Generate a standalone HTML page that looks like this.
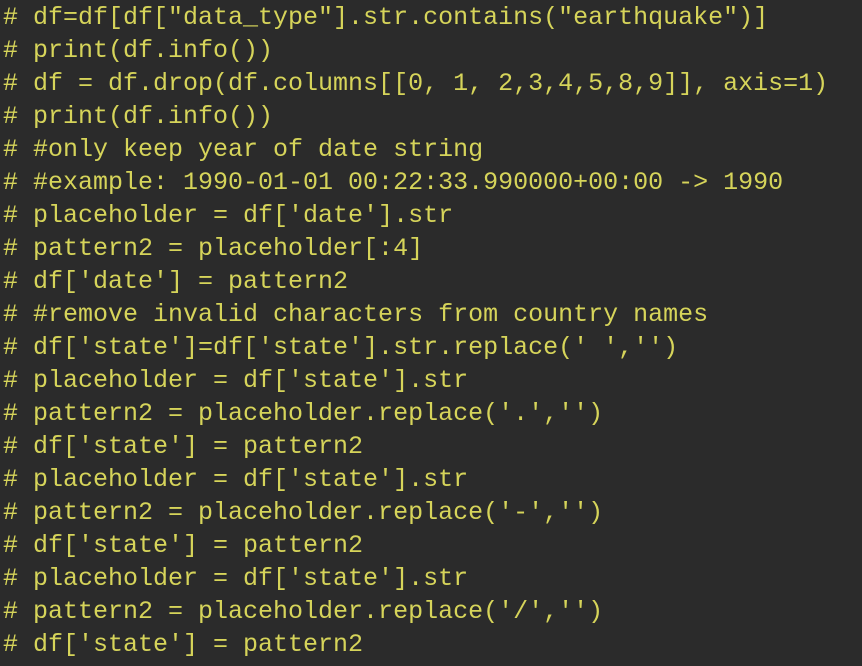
<!DOCTYPE html>
<html><head><style>
html,body{margin:0;padding:0;background:#2b2b2b;width:862px;height:666px;overflow:hidden}
pre{margin:0;padding:0 0 0 3px;position:relative;top:1px;font-family:"Liberation Mono",monospace;font-size:25px;line-height:33px;color:#d6d45a;letter-spacing:0}
</style></head><body><pre># df=df[df["data_type"].str.contains("earthquake")]
# print(df.info())
# df = df.drop(df.columns[[0, 1, 2,3,4,5,8,9]], axis=1)
# print(df.info())
# #only keep year of date string
# #example: 1990-01-01 00:22:33.990000+00:00 -&gt; 1990
# placeholder = df['date'].str
# pattern2 = placeholder[:4]
# df['date'] = pattern2
# #remove invalid characters from country names
# df['state']=df['state'].str.replace(' ','')
# placeholder = df['state'].str
# pattern2 = placeholder.replace('.','')
# df['state'] = pattern2
# placeholder = df['state'].str
# pattern2 = placeholder.replace('-','')
# df['state'] = pattern2
# placeholder = df['state'].str
# pattern2 = placeholder.replace('/','')
# df['state'] = pattern2</pre></body></html>
